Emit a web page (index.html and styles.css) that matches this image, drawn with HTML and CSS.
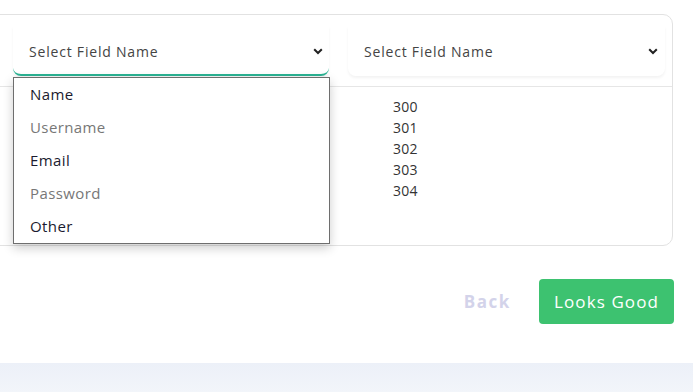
FILE: index.html
```html
<!DOCTYPE html>
<html lang="en">
<head>
    <meta charset="UTF-8">
    <title>Map Fields</title>
    <link rel="stylesheet" href="styles.css">
</head>
<body>
    <div class="main">
        <div class="card">
            <div class="card-head">
                <div class="select focused">
                    <span>Select Field Name</span>
                    <svg class="chevron" width="10" height="7" viewBox="0 0 10 7"><polyline points="1.2,1.2 5,5 8.8,1.2" fill="none" stroke="#222" stroke-width="2"/></svg>
                </div>
                <div class="select">
                    <span>Select Field Name</span>
                    <svg class="chevron" width="10" height="7" viewBox="0 0 10 7"><polyline points="1.2,1.2 5,5 8.8,1.2" fill="none" stroke="#222" stroke-width="2"/></svg>
                </div>
                <ul class="dropdown">
                    <li>Name</li>
                    <li class="muted">Username</li>
                    <li>Email</li>
                    <li class="muted">Password</li>
                    <li>Other</li>
                </ul>
            </div>
            <div class="card-body">
                <div class="col"></div>
                <div class="col values">
                    <div>300</div>
                    <div>301</div>
                    <div>302</div>
                    <div>303</div>
                    <div>304</div>
                </div>
            </div>
        </div>

        <div class="actions">
            <button class="btn-back">Back</button>
            <button class="btn-good">Looks Good</button>
        </div>
    </div>
    <div class="bottom-band"></div>
</body>
</html>
```

FILE: styles.css
```css
body {
    margin: 0;
    font-family: "Open Sans", "Liberation Sans", sans-serif;
    background-color: #fff;
    color: #333;
}
.main {
    padding: 14px 20px 0 0;
    height: 363px;
    box-sizing: border-box;
}
.card {
    margin-left: -20px;
    border: 1px solid #e2e2e2;
    border-radius: 10px;
    height: 232px;
    box-sizing: border-box;
}
.card-head {
    position: relative;
    display: grid;
    grid-template-columns: 316px 317px;
    column-gap: 19px;
    padding: 11px 8px 10px 32px;
    border-bottom: 1px solid #e6e6e6;
}
.select {
    height: 50px;
    display: flex;
    align-items: center;
    justify-content: space-between;
    padding: 0 7px 0 16px;
    border-radius: 0 0 8px 8px;
    box-shadow: 0 2px 3px rgba(0, 0, 0, 0.05);
    font-size: 14px;
    letter-spacing: 0.8px;
    color: #444;
    box-sizing: border-box;
}
.select.focused {
    border-bottom: 2px solid #2bb393;
    padding-top: 2px;
    padding-right: 6px;
}
.chevron {
    display: block;
}
.dropdown {
    position: absolute;
    left: 32px;
    top: 62px;
    width: 315px;
    margin: 0;
    padding: 0;
    list-style: none;
    background-color: #fff;
    border: 1px solid #6e6e6e;
    box-shadow: 0 4px 10px rgba(0, 0, 0, 0.2);
    z-index: 2;
}
.dropdown li {
    height: 33px;
    line-height: 33px;
    padding-left: 16px;
    font-size: 15px;
    letter-spacing: 0.4px;
    color: #1b1b2f;
}
.dropdown li.muted {
    color: #777;
}
.card-body {
    display: grid;
    grid-template-columns: 316px 317px;
    column-gap: 19px;
    padding: 9px 8px 0 32px;
}
.values {
    padding-left: 45px;
    font-size: 14px;
    line-height: 21px;
    letter-spacing: 0.3px;
    color: #333;
}
.actions {
    display: flex;
    justify-content: flex-end;
    align-items: center;
    gap: 28px;
    margin-top: 33px;
    margin-right: -1px;
}
.actions button {
    font-family: inherit;
    font-size: 17px;
    border: none;
    cursor: pointer;
}
.btn-back {
    background: none;
    color: #d3d3ea;
    font-weight: bold;
    letter-spacing: 1.6px;
    padding: 0;
}
.btn-good {
    width: 135px;
    height: 45px;
    border-radius: 4px;
    background-color: #3dc270;
    color: #fff;
    letter-spacing: 1.1px;
}
.bottom-band {
    height: 29px;
    background: linear-gradient(180deg, #ecf0f8, #f2f5fa);
}
```
